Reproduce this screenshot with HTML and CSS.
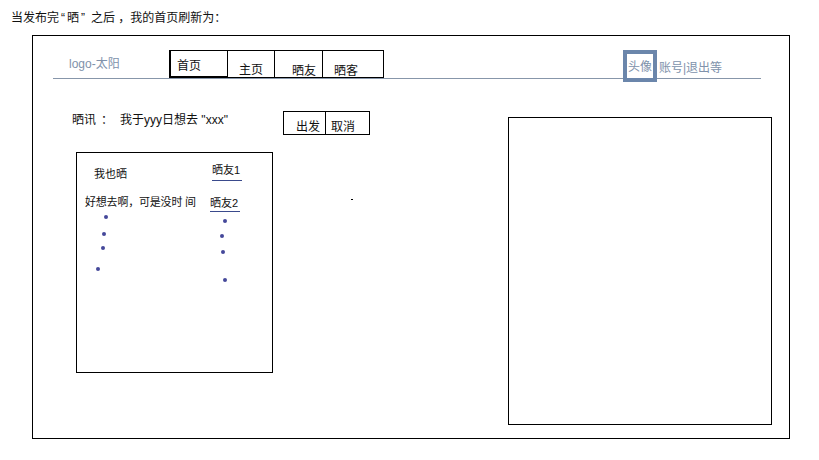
FILE: index.html
```html
<!DOCTYPE html>
<html lang="zh-CN">
<head>
<meta charset="utf-8">
<title>晒 - 首页</title>
<link rel="stylesheet" href="styles.css">
</head>
<body>
<p class="caption">当发布完<span class="quoted">“晒”</span>之后 ，我的首页刷新为：</p>
<div class="frame">
  <div class="header">
    <div class="logo">logo-太阳</div>
    <div class="tabs">
      <div class="tab tab-home">首页</div>
      <div class="tab tab-main">主页</div>
      <div class="tab tab-friends">晒友</div>
      <div class="tab tab-guests">晒客</div>
    </div>
    <div class="user">
      <div class="avatar">头像</div>
      <div class="account">账号|退出等</div>
    </div>
  </div>
  <div class="content">
    <div class="main">
      <div class="post-row">
        <div class="post-text"><span class="label">晒讯</span><span class="colon">：</span><span class="msg">我于yyy日想去 "xxx"</span></div>
        <div class="buttons">
          <div class="btn btn-go">出发</div>
          <div class="btn btn-cancel">取消</div>
        </div>
      </div>
      <div class="feed-row">
        <div class="feed">
          <div class="col-a">
            <div class="me-too">我也晒</div>
            <div class="comment">好想去啊，可是没时 间</div>
            <i class="dot a1"></i>
            <i class="dot a2"></i>
            <i class="dot a3"></i>
            <i class="dot a4"></i>
          </div>
          <div class="col-b">
            <div class="friend f1">晒友1</div>
            <div class="friend f2">晒友2</div>
            <i class="dot b1"></i>
            <i class="dot b2"></i>
            <i class="dot b3"></i>
            <i class="dot b4"></i>
          </div>
        </div>
        <i class="speck"></i>
      </div>
    </div>
    <div class="side"></div>
  </div>
</div>
</body>
</html>
```
FILE: styles.css
```css
html, body {
  margin: 0;
  padding: 0;
  background: #ffffff;
}
body {
  font-family: "Liberation Sans", "Noto Sans CJK SC", sans-serif;
  font-size: 12px;
  line-height: 14px;
  color: #111111;
  width: 819px;
  height: 460px;
  overflow: hidden;
}
.caption {
  margin: 11px 0 0 11px;
  height: 14px;
  white-space: nowrap;
}
.quoted {
  padding: 0 4px 0 2px;
  letter-spacing: 2px;
}
.frame {
  box-sizing: border-box;
  margin: 10px 0 0 32px;
  width: 758px;
  height: 404px;
  border: 1px solid #000;
}

/* header */
.header {
  display: flex;
  align-items: flex-start;
  height: 28px;
  width: 708px;
  margin: 14px 0 0 20px;
  border-bottom: 1px solid #8796aa;
}
.logo {
  width: 100px;
  margin: 7px 0 0 16px;
  color: #8092ab;
  white-space: nowrap;
}
.tabs {
  display: flex;
}
.tab {
  box-sizing: border-box;
  height: 28px;
  border-top: 1px solid #000;
  border-right: 1px solid #000;
  border-bottom: 1px solid #000;
  color: #111;
  white-space: nowrap;
}
.tab-home {
  width: 59px;
  border-left: 2px solid #000;
  border-bottom: 2px solid #000;
  padding: 8px 0 0 6px;
}
.tab-main {
  width: 47px;
  padding: 12px 0 0 11px;
}
.tab-friends {
  width: 48px;
  padding: 13px 0 0 17px;
}
.tab-guests {
  width: 61px;
  padding: 13px 0 0 11px;
}
.user {
  display: flex;
  align-items: flex-start;
  margin-left: 239px;
}
.avatar {
  box-sizing: border-box;
  width: 34px;
  height: 32px;
  border: 4px solid #6b86ab;
  background: #fff;
  color: #8092ab;
  text-align: center;
  padding-top: 6px;
  position: relative;
  white-space: nowrap;
}
.account {
  margin: 11px 0 0 2px;
  color: #8092ab;
  white-space: nowrap;
}

/* content */
.content {
  display: flex;
  justify-content: space-between;
  align-items: flex-start;
  margin-top: 32px;
  padding: 0 17px 0 39px;
}
.main {
  display: flex;
  flex-direction: column;
}
.post-row {
  display: flex;
  align-items: flex-start;
}
.post-text {
  width: 211px;
  margin-top: 2px;
  white-space: nowrap;
}
.colon {
  margin-left: 5px;
}
.msg {
  margin-left: 7px;
}
.buttons {
  display: flex;
}
.btn {
  box-sizing: border-box;
  height: 24px;
  border-top: 1px solid #000;
  border-right: 1px solid #000;
  border-bottom: 1px solid #000;
  padding-top: 8px;
  white-space: nowrap;
}
.btn-go {
  width: 43px;
  border-left: 1px solid #000;
  padding-left: 12px;
}
.btn-cancel {
  width: 44px;
  padding-left: 5px;
}

.feed-row {
  display: flex;
  align-items: flex-start;
  margin: 17px 0 0 4px;
}
.feed {
  box-sizing: border-box;
  width: 197px;
  height: 221px;
  border: 1px solid #000;
  display: flex;
  font-size: 11px;
  line-height: 13px;
}
.col-a {
  width: 133px;
  display: flex;
  flex-direction: column;
  align-items: flex-start;
}
.col-b {
  display: flex;
  flex-direction: column;
  align-items: flex-start;
}
.me-too {
  margin: 15px 0 0 17px;
}
.comment {
  margin: 15px 0 0 8px;
  white-space: nowrap;
  letter-spacing: -0.2px;
}
.friend {
  width: 30px;
  border-bottom: 1px solid #3a4a8c;
  white-space: nowrap;
}
.f1 {
  margin: 11px 0 0 2px;
  padding-bottom: 3px;
}
.f2 {
  margin: 16px 0 0 0;
  padding-bottom: 1px;
}
.dot {
  display: block;
  width: 4px;
  height: 4px;
  border-radius: 50%;
  background: #45489a;
}
.a1 { margin: 6px 0 0 27px; }
.a2 { margin: 13px 0 0 25px; }
.a3 { margin: 10px 0 0 24px; }
.a4 { margin: 17px 0 0 19px; }
.b1 { margin: 7px 0 0 13px; }
.b2 { margin: 11px 0 0 10px; }
.b3 { margin: 12px 0 0 11px; }
.b4 { margin: 24px 0 0 13px; }

.speck {
  display: block;
  width: 2px;
  height: 1px;
  background: #000;
  margin: 47px 0 0 78px;
}
.side {
  box-sizing: border-box;
  width: 264px;
  height: 308px;
  margin-top: 6px;
  border: 1px solid #000;
}
```
